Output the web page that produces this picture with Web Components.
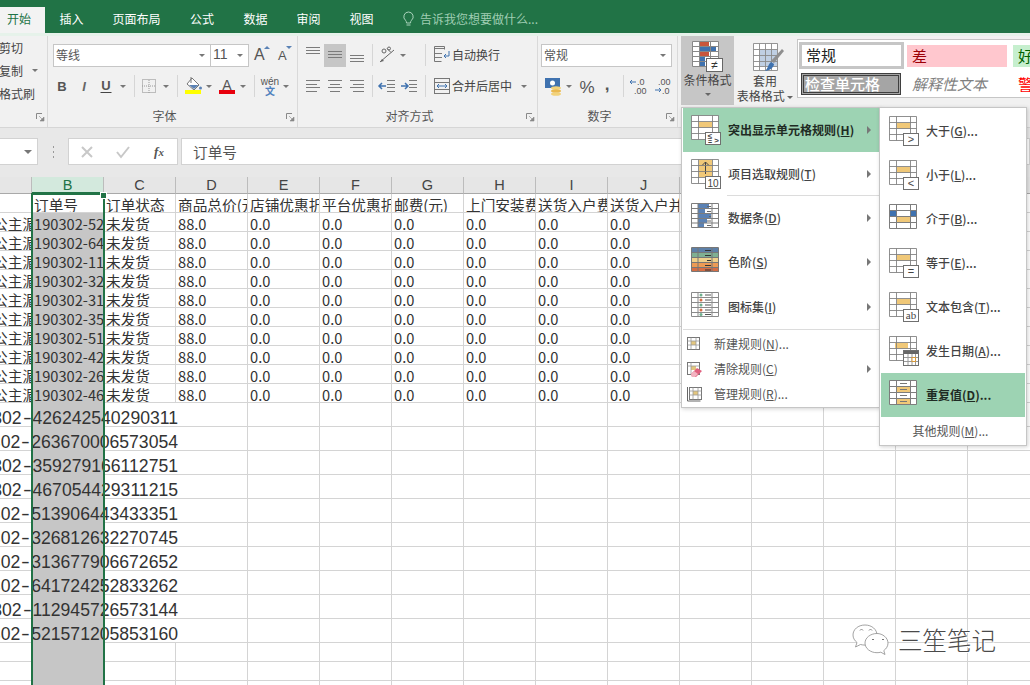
<!DOCTYPE html>
<html lang="zh"><head><meta charset="utf-8"><title>Excel</title>
<style>
html,body{margin:0;padding:0;width:1030px;height:685px;overflow:hidden;background:#fff}
body{font-family:"Noto Sans CJK SC","Liberation Sans",sans-serif;display:flex;flex-direction:column;position:relative}
</style></head><body>
<xl-titlebar></xl-titlebar>
<xl-ribbon>
  <xl-group w="48" label="" launcher="1" pad="0">
    <xl-text w="47" h="23" ml="-1">剪切</xl-text>
    <xl-row h="23"><xl-text w="30" h="23" ml="-1">复制</xl-text><xl-caret w="12"></xl-caret></xl-row>
    <xl-text w="47" h="23" ml="-1">格式刷</xl-text>
  </xl-group>
  <xl-group w="250" label="字体" launcher="1" pad="11">
    <xl-row mb="9" ml="5">
      <xl-select w="158" text="等线" arrow="1"></xl-select><xl-select w="39" text="11" arrow="1" num="1" ml="-1"></xl-select>
      <xl-btn w="22" ml="1" icon="grow"></xl-btn><xl-btn w="22" icon="shrink"></xl-btn>
    </xl-row>
    <xl-row ml="3">
      <xl-btn w="22" icon="bold"></xl-btn><xl-btn w="22" icon="italic"></xl-btn><xl-btn w="22" icon="under"></xl-btn><xl-caret w="12"></xl-caret>
      <xl-sep ml="5" mr="3"></xl-sep><xl-btn w="22" icon="border"></xl-btn><xl-caret w="12"></xl-caret>
      <xl-sep ml="5" mr="4"></xl-sep><xl-btn w="22" icon="fill"></xl-btn><xl-caret w="10"></xl-caret>
      <xl-btn w="22" ml="2" icon="fontcolor"></xl-btn><xl-caret w="10"></xl-caret>
      <xl-sep ml="6" mr="4"></xl-sep><xl-btn w="22" icon="wen"></xl-btn><xl-caret w="10"></xl-caret>
    </xl-row>
  </xl-group>
  <xl-group w="240" label="对齐方式" launcher="1" pad="11">
    <xl-row mb="9" ml="4">
      <xl-btn w="22" icon="atop"></xl-btn><xl-btn w="22" icon="amid" on="1"></xl-btn><xl-btn w="22" icon="abot"></xl-btn>
      <xl-sep ml="4" mr="4"></xl-sep><xl-btn w="22" icon="orient"></xl-btn><xl-caret w="8"></xl-caret>
      <xl-sep ml="18" mr="6"></xl-sep><xl-btn w="20" icon="wrap"></xl-btn><xl-label w="60">自动换行</xl-label>
    </xl-row>
    <xl-row ml="4">
      <xl-btn w="22" icon="aleft"></xl-btn><xl-btn w="22" icon="acen"></xl-btn><xl-btn w="22" icon="aright"></xl-btn>
      <xl-sep ml="4" mr="4"></xl-sep><xl-btn w="22" icon="indl"></xl-btn><xl-btn w="22" icon="indr"></xl-btn>
      <xl-sep ml="4" mr="6"></xl-sep><xl-btn w="20" icon="merge"></xl-btn><xl-label w="60">合并后居中</xl-label><xl-caret w="24"></xl-caret>
    </xl-row>
  </xl-group>
  <xl-group w="140" label="数字" launcher="1" pad="11">
    <xl-row mb="9" ml="3"><xl-select w="131" text="常规" arrow="1"></xl-select></xl-row>
    <xl-row ml="4">
      <xl-btn w="22" ml="0" icon="money"></xl-btn><xl-caret w="10"></xl-caret>
      <xl-btn w="22" ml="2" icon="pct"></xl-btn><xl-btn w="18" icon="comma"></xl-btn>
      <xl-sep ml="7" mr="3"></xl-sep><xl-btn w="22" icon="decl"></xl-btn><xl-btn w="24" icon="decr"></xl-btn>
    </xl-row>
  </xl-group>
  <xl-styles></xl-styles>
</xl-ribbon>
<xl-formula text="订单号"></xl-formula>
<xl-sheet></xl-sheet>

<xl-menu x="681" y="107" w="200" z="3" pt="0">
  <xl-item big="1" on="1" icon="t-le" label="突出显示单元格规则" k="H" arrow="1"></xl-item>
  <xl-item big="1" h="43" icon="t-top" label="项目选取规则" k="T" arrow="1"></xl-item>
  <xl-msep ml="44"></xl-msep>
  <xl-item big="1" icon="t-bar" label="数据条" k="D" arrow="1"></xl-item>
  <xl-item big="1" icon="t-scale" label="色阶" k="S" arrow="1"></xl-item>
  <xl-item big="1" h="45" icon="t-set" label="图标集" k="I" arrow="1"></xl-item>
  <xl-msep ml="0" mb="1"></xl-msep>
  <xl-item icon="s-new" label="新建规则" k="N" tail="..."></xl-item>
  <xl-item icon="s-clr" label="清除规则" k="C" arrow="1"></xl-item>
  <xl-item icon="s-mng" label="管理规则" k="R" tail="..." mb="1"></xl-item>
</xl-menu>
<xl-menu x="879" y="107" w="148" z="4" pt="1">
  <xl-item big="1" icon="t-gt" label="大于" k="G" tail="..."></xl-item>
  <xl-item big="1" icon="t-lt" label="小于" k="L" tail="..."></xl-item>
  <xl-item big="1" icon="t-btw" label="介于" k="B" tail="..."></xl-item>
  <xl-item big="1" icon="t-eq" label="等于" k="E" tail="..."></xl-item>
  <xl-item big="1" icon="t-ab" label="文本包含" k="T" tail="..."></xl-item>
  <xl-item big="1" icon="t-date" label="发生日期" k="A" tail="..."></xl-item>
  <xl-item big="1" on="1" icon="t-dup" label="重复值" k="D" tail="..."></xl-item>
  <xl-item center="1" label="其他规则" k="M" tail="..."></xl-item>
</xl-menu>
<xl-watermark></xl-watermark>

<script>
const FONT='"Noto Sans CJK SC","Liberation Sans",sans-serif';
const LAT='"Liberation Sans","Noto Sans CJK SC",sans-serif';
const s=(w,h,b,extra='')=>`<svg xmlns="http://www.w3.org/2000/svg" width="${w}" height="${h}" viewBox="0 0 ${w} ${h}" ${extra}>${b}</svg>`;
const lines=(a,c='#7b7b7b')=>`<g stroke="${c}" stroke-width="1" fill="none">`+a.map(([x1,x2,y])=>`<path d="M${x1} ${y}H${x2}"/>`).join('')+`</g>`;
const svgText=(x,y,t,o='')=>`<text x="${x}" y="${y}" font-family='"Liberation Sans",sans-serif' ${o}>${t}</text>`;
function table(inner='',badge=''){
  const g='#7d7d7d';
  return s(32,32,`<rect x=".5" y="1.5" width="27" height="24" fill="#fff"/>${inner}
  <path d="M.5 1.5H27.5V25.5H.5ZM.5 7.5H27.5M.5 13.5H27.5M.5 19.5H27.5M7.5 1.5V25.5M21.5 1.5V25.5" fill="none" stroke="${g}" stroke-width="1" opacity=".85"/>${badge}`);
}
const box=(t,size=11,y=28)=>`<rect x="14.5" y="18.5" width="15" height="12" fill="#fff" stroke="#6f6f6f"/>`+svgText(22,y,t,`font-size="${size}" text-anchor="middle" fill="#444"`);
const Y='#f0c878',B='#5b82b5';
const ICONS={
 grow:s(22,22,svgText(4,16,'A','font-size="16" fill="#555"')+`<path d="M14 5l3-3 3 3z" fill="#5b82b5"/>`),
 shrink:s(22,22,svgText(6,16,'A','font-size="13" fill="#555"')+`<path d="M14 2l3 3 3-3z" fill="#5b82b5"/>`),
 bold:s(22,22,svgText(11,16,'B','font-size="13" font-weight="700" text-anchor="middle" fill="#555"')),
 italic:s(22,22,svgText(11,16,'I','font-size="13" font-style="italic" font-weight="700" text-anchor="middle" fill="#666" font-family="Liberation Serif"')),
 under:s(22,22,svgText(11,15,'U','font-size="13" font-weight="700" text-anchor="middle" fill="#555"')+`<path d="M5.5 17.5h11" stroke="#444"/>`),
 border:s(22,22,`<rect x="4.5" y="4.5" width="13" height="13" fill="none" stroke="#888" stroke-dasharray="1 1"/><path d="M11 5v13M4 11h14" stroke="#999" stroke-dasharray="1 1"/>`),
 fill:s(22,22,`<path d="M10 3l7 7-5 5-7-6z" fill="#fff" stroke="#777"/><path d="M9 2v6" stroke="#777"/><path d="M7 10l5 4 4.500-4z" fill="#5b82b5"/><circle cx="18.500" cy="13" r="1.500" fill="#5b82b5"/><rect x="3" y="15" width="16" height="4" fill="#ffff00"/>`),
 fontcolor:s(22,22,svgText(11,15,'A','font-size="14" font-weight="400" text-anchor="middle" fill="#555"')+`<rect x="3" y="15" width="16" height="4" fill="#e8000d"/>`),
 wen:s(22,22,svgText(11,9.500,'wén','font-size="10" text-anchor="middle" fill="#555"')+`<text x="11" y="19.500" font-family='"Noto Sans CJK SC"' font-size="10" font-weight="700" text-anchor="middle" fill="#4f81bd">文</text>`),
 atop:s(22,22,lines([[4,18,3.5],[4,18,6.5],[4,18,9.5]])),
 amid:s(22,22,lines([[4,18,7.5],[4,18,10.5],[4,18,13.5]])),
 abot:s(22,22,lines([[4,18,11.5],[4,18,14.5],[4,18,17.5]])),
 aleft:s(22,22,lines([[4,18,5.5],[4,15,9.5],[4,18,12.5],[4,15,16.5]])),
 acen:s(22,22,lines([[4,18,5.5],[6,16,9.5],[4,18,12.5],[6,16,16.5]])),
 aright:s(22,22,lines([[4,18,5.5],[7,18,9.5],[4,18,12.5],[7,18,16.5]])),
 orient:s(22,22,`<g fill="none" stroke="#666"><path d="M3 18L17 6"/><circle cx="7" cy="7" r="2"/><path d="M10 4.500l4 4"/><circle cx="12" cy="4.500" r="1.500"/></g><path d="M3 18l4-1-2-2z" fill="#666"/>`),
 indl:s(22,22,lines([[10,18,5.5],[10,18,9.5],[10,18,12.5],[10,18,16.5]])+`<path d="M9 11H2M5 8l-3 3 3 3" fill="none" stroke="#3f72af" stroke-width="1.500"/>`),
 indr:s(22,22,lines([[10,18,5.5],[10,18,9.5],[10,18,12.5],[10,18,16.5]])+`<path d="M2 11h7M6 8l3 3-3 3" fill="none" stroke="#3f72af" stroke-width="1.500"/>`),
 wrap:s(20,22,lines([[3,13,4.5],[3,10,9.500],[3,10,13.500],[3,9,17.500]])+`<path d="M2.500 2.500h10v3M2.500 2.500v15h7" fill="none" stroke="#777"/><path d="M12 12h5M17 7v5M12 12l2-2M12 12l2 2" fill="none" stroke="#3f72af"/>`),
 merge:s(20,22,`<rect x="2.500" y="3.500" width="15" height="15" fill="none" stroke="#777"/><path d="M2.500 7.500h15M2.500 14.500h15" stroke="#777"/><path d="M5 11h10M5 11l2-2M5 11l2 2M15 11l-2-2M15 11l-2 2" fill="none" stroke="#3f72af"/>`),
 money:s(22,22,`<rect x="3" y="3" width="15" height="10" fill="#3f72af"/><circle cx="10.500" cy="8" r="2.500" fill="#fff"/><ellipse cx="14" cy="13" rx="5" ry="1.800" fill="#f2d27a"/><ellipse cx="14" cy="16" rx="5" ry="1.800" fill="#eab94f"/><ellipse cx="14" cy="19" rx="5" ry="1.800" fill="#f2d27a"/>`),
 pct:s(22,22,svgText(11,18,'%','font-size="17" text-anchor="middle" fill="#555"')),
 comma:s(18,22,svgText(9,15,',','font-size="17" font-weight="700" text-anchor="middle" fill="#555"')),
 decl:s(22,22,svgText(10,10,'.0','font-size="9" fill="#555"')+svgText(7,18.500,'.00','font-size="9" fill="#555"')+`<path d="M9 7H3M3 7l2-2M3 7l2 2" fill="none" stroke="#3f72af"/>`),
 decr:s(24,22,svgText(9,10,'.00','font-size="9" fill="#555"')+svgText(13,18.500,'.0','font-size="9" fill="#555"')+`<path d="M6 15h6M12 15l-2-2M12 15l-2 2" fill="none" stroke="#3f72af"/>`),
 launcher:s(9,9,`<path d="M.5 .5H6M.5 .5V6" stroke="#888" fill="none"/><path d="M3 3l4 4M8 4v4H4z" fill="#888" stroke="#888" stroke-width=".6"/>`),
 cf:s(32,31,`<rect x=".5" y=".5" width="26" height="25" fill="#fff"/><rect x="8" y="1" width="9" height="5" fill="#c9563c"/><rect x="8" y="6" width="16" height="5" fill="#3f72af"/><rect x="8" y="11" width="9" height="5" fill="#c9563c"/><rect x="8" y="16" width="5" height="5" fill="#3f72af"/><rect x="8" y="21" width="5" height="4" fill="#3f72af"/>
   <path d="M.5 .5H26.500V25.500H.5ZM.5 5.500H26.500M.5 10.500H26.500M.5 15.500H26.500M.5 20.500H26.500M7.500 .5V25.500M18.500 .5V25.500" fill="none" stroke="#888"/>
   <rect x="14.500" y="17.500" width="16" height="13" fill="#fff" stroke="#666"/>`+svgText(22.5,28,'≠','font-size="12" text-anchor="middle" fill="#333"')),
 tf:s(32,30,`<rect x=".5" y=".5" width="24" height="27" fill="#fff"/><rect x="7" y="7" width="17" height="16" fill="#bfcfe3"/><path d="M.5 .5H24.500V27.500H.5ZM.5 6.500H24.500M.5 12.500H24.500M.5 18.500H24.500M.5 23.500H24.500M6.500 .5V27.500M12.500 .5V27.500M18.500 .5V27.500" fill="none" stroke="#8a8a8a" opacity=".9"/>
   <path d="M29 6l2 2-10 12-3-2z" fill="#8f8f8f"/><path d="M18 19l3 2c0 3-4 7-9 7 3-2 3-7 6-9z" fill="#3f72af"/>`),
 't-le':table(`<rect x="8" y="8" width="13" height="5.500" fill="${Y}"/>`,`<rect x="14.500" y="18.500" width="15" height="12" fill="#fff" stroke="#6f6f6f"/>`+svgText(19,25,'≤','font-size="8" text-anchor="middle" fill="#444"')+svgText(19,30,'=','font-size="7" text-anchor="middle" fill="#444"')+svgText(25.5,29,'&gt;','font-size="8" text-anchor="middle" fill="#444"')),
 't-top':table(`<rect x="8" y="2" width="13" height="17" fill="${Y}"/><path d="M14.500 16V4M11 7.500l3.500-3.500 3.500 3.500" fill="none" stroke="#444"/>`,box('10',10,28.5)),
 't-bar':s(32,32,`<rect x=".5" y="1.500" width="27" height="24" fill="#fff"/><rect x="7" y="2" width="11" height="5" fill="${B}"/><rect x="7" y="7" width="7" height="5" fill="${B}"/><rect x="7" y="12" width="13" height="5" fill="${B}"/><rect x="7" y="17" width="9" height="4" fill="${B}"/><rect x="7" y="21" width="6" height="4" fill="${B}"/>
   <path d="M.5 1.500H27.500V25.500H.5ZM.5 6.500H27.500M.5 11.500H27.500M.5 16.500H27.500M.5 21H27.500M7 1.500V25.500M21 1.500V25.500" fill="none" stroke="#7d7d7d"/><path d="M16 4.500h4M16 9.500h4M18 14.500h2M16 19h4M16 23.500h4" stroke="#666"/>`),
 't-scale':s(32,32,`<rect x="1" y="2" width="27" height="5" fill="#5d80a8"/><rect x="1" y="7" width="27" height="5" fill="#7fb092"/><rect x="1" y="12" width="27" height="5" fill="#efd08a"/><rect x="1" y="17" width="27" height="5" fill="#ed9b55"/><rect x="1" y="22" width="27" height="4" fill="#d66d44"/>
   <path d="M.5 1.500H27.500V25.500H.5ZM.5 6.500H27.500M.5 11.500H27.500M.5 16.500H27.500M.5 21.500H27.500M7 1.500V25.500M21 1.500V25.500" fill="none" stroke="#777"/><path d="M14 4.500h6M14 9.500h6M16 14.500h4M14 19.500h6M14 24h6" stroke="#333"/>`),
 't-set':s(32,32,`<rect x=".5" y="1.500" width="27" height="24" fill="#fff"/><path d="M.5 1.500H27.500V25.500H.5ZM.5 6.500H27.500M.5 11.500H27.500M.5 16.500H27.500M.5 21.500H27.500M7 1.500V25.500M21 1.500V25.500" fill="none" stroke="#8a8a8a"/>
   <circle cx="10" cy="4" r="1.500" fill="#6db08d"/><circle cx="10" cy="9" r="1.500" fill="#d66d44"/><circle cx="10" cy="14" r="1.500" fill="#6db08d"/><circle cx="10" cy="19" r="1.500" fill="#d66d44"/><circle cx="10" cy="23.500" r="1.500" fill="#6db08d"/>
   <path d="M14 4h6M14 9h6M14 14h6M14 19h6M14 23.500h6" stroke="#555"/>`),
 't-gt':table(`<rect x="8" y="8" width="13" height="5.500" fill="${Y}"/>`,box('&gt;')),
 't-lt':table(`<rect x="8" y="8" width="13" height="5.500" fill="${Y}"/>`,box('&lt;')),
 't-btw':s(32,32,`<rect x=".5" y="1.500" width="27" height="24" fill="#fff"/><rect x="1" y="8" width="7" height="5.500" fill="#3f72af"/><rect x="21" y="8" width="7" height="5.500" fill="#3f72af"/><rect x="8" y="14" width="13" height="5.500" fill="${Y}"/><path d="M.5 1.500H27.500V25.500H.5ZM.5 7.500H27.500M.5 13.500H27.500M.5 19.500H27.500M7.500 1.500V25.500M21.500 1.500V25.500" fill="none" stroke="#7d7d7d"/>`),
 't-eq':table(`<rect x="8" y="8" width="13" height="5.500" fill="${Y}"/>`,box('=')),
 't-ab':table(`<rect x="8" y="8" width="13" height="5.500" fill="${Y}"/>`,`<rect x="14.500" y="18.500" width="15" height="12" fill="#fff" stroke="#6f6f6f"/><text x="22" y="28" font-family="Liberation Serif" font-size="11" text-anchor="middle" fill="#444">ab</text>`),
 't-date':table(`<rect x="6" y="8" width="13" height="5.500" fill="${Y}"/>`,`<rect x="14.500" y="15.500" width="15" height="15" fill="#fff" stroke="#6f6f6f"/><rect x="15" y="16" width="14" height="3" fill="#666"/><path d="M15 22.500h14M15 26.500h14M19 19v11M23 19v11M26.500 19v11" stroke="#999"/><rect x="23" y="22.500" width="3.500" height="4" fill="#fff" stroke="#d89a3b"/>`),
 't-dup':s(32,32,`<rect x=".5" y="1.500" width="27" height="24" fill="#fff"/><rect x="8" y="8" width="13" height="5.500" fill="${Y}"/><rect x="8" y="19.500" width="13" height="6" fill="${Y}"/><path d="M.5 1.500H27.500V25.500H.5ZM.5 7.500H27.500M.5 13.500H27.500M.5 19.500H27.500M7.500 1.500V25.500M21.500 1.500V25.500" fill="none" stroke="#7d7d7d"/><path d="M11 4.500h7M11 10.500h7M11 16.500h7M11 22.500h7" stroke="#777"/>`),
 's-new':s(16,16,`<rect x="1.500" y="1.500" width="12" height="12" fill="#fff" stroke="#777"/><rect x="5" y="5" width="5" height="4" fill="#e3c67e"/><path d="M1.500 5h12M1.500 9h12M5 1.500v12M10 1.500v12" stroke="#999" stroke-width=".8"/>`),
 's-clr':s(16,16,`<rect x="1.500" y="1.500" width="12" height="12" fill="#fff" stroke="#777"/><rect x="5" y="5" width="5" height="4" fill="#e3c67e"/><path d="M1.500 5h12M5 1.500v12" stroke="#999" stroke-width=".8"/><path d="M5 13l6-6 5 3-6 6H6z" fill="#e0607e"/><path d="M5 13l3-3 4 3-3 3H6z" fill="#f2b3c0"/>`),
 's-mng':s(16,16,`<rect x="3.500" y="1.500" width="12" height="12" fill="#fff" stroke="#777"/><rect x="7" y="5" width="5" height="4" fill="#e3c67e"/><path d="M3.500 5h12M3.500 9h12M7 1.500v12M12 1.500v12" stroke="#999" stroke-width=".8"/><path d="M1.500 1v14h13" fill="none" stroke="#666"/>`)
};
const attr=(el,n,d)=>el.hasAttribute(n)?el.getAttribute(n):d;
class Base extends HTMLElement{
  render(css,html){const r=this.attachShadow({mode:'open'});r.innerHTML=`<style>${css}</style>${html}`;return r;}
  px(prop,a,def){const v=attr(this,a,def);if(v!==undefined&&v!==null)this.style[prop]=v+'px';}
}
customElements.define('xl-titlebar',class extends Base{connectedCallback(){
  const tabs=[['开始',45,1],['插入',53],['页面布局',77],['公式',54],['数据',53],['审阅',53],['视图',53]];
  this.render(`:host{display:flex;align-items:flex-end;height:33px;background:#217346;font:12px ${FONT};color:#fff;flex:none}
  .t{height:26px;display:flex;align-items:center;justify-content:center;padding-bottom:4px;box-sizing:border-box}
  .a{background:#f3f3f3;color:#217346;padding-right:7px}
  .s{display:flex;align-items:center;height:26px;padding-bottom:3px;box-sizing:border-box;margin-left:14px;color:#9fcdb2;gap:5px}`,
  tabs.map(t=>`<div class="t ${t[2]?'a':''}" style="width:${t[1]}px">${t[0]}</div>`).join('')+
  `<div class="s"><svg width="13" height="16" viewBox="0 0 13 16"><path d="M6.500 1a4.700 4.700 0 0 0-3 8.300c.7.7 1 1.500 1 2.700h4c0-1.200.3-2 1-2.700a4.700 4.700 0 0 0-3-8.300zM4.500 14h4" fill="none" stroke="#a9d3bb"/></svg><span>告诉我您想要做什么...</span></div>`);
}});
customElements.define('xl-ribbon',class extends Base{connectedCallback(){
  this.render(`:host{display:flex;height:95px;flex:none;box-sizing:border-box;background:#f1f1f1;border-top:3px solid #e6f2ea;border-bottom:1px solid #d6d6d6;font:12px ${FONT};color:#444;overflow:hidden}`,`<slot></slot>`);
}});
customElements.define('xl-group',class extends Base{connectedCallback(){
  const lab=attr(this,'label','');
  const pad=+attr(this,'pad','0');
  this.style.width=attr(this,'w')+'px';
  this.render(`:host{display:flex;flex-direction:column;box-sizing:border-box;height:91px;border-right:1px solid #d9d9d9;flex:none}
  .b{flex:none;height:71px;box-sizing:border-box;padding-top:${pad?pad-3:0}px;display:flex;flex-direction:column;overflow:hidden}
  .l{display:grid;grid-template-columns:1fr auto 1fr;align-items:center;height:17px;color:#555;font-size:12px;padding:0 0 0 0}
  .lab{transform:none;margin-right:16px}
  .m{justify-self:end;display:flex;margin-right:2px;margin-top:3px}`,
  `<div class="b"><slot></slot></div><div class="l"><span></span><span class="lab">${lab}</span><span class="m">${ICONS.launcher}</span></div>`);
}});
customElements.define('xl-row',class extends Base{connectedCallback(){
  this.px('marginBottom','mb',0);this.px('marginLeft','ml',0);this.px('height','h',22);
  this.render(`:host{display:flex;align-items:center;flex:none}`,`<slot></slot>`);
}});
customElements.define('xl-text',class extends Base{connectedCallback(){
  this.px('height','h');this.px('marginLeft','ml');if(this.hasAttribute('w'))this.style.width=attr(this,'w')+'px';
  this.render(`:host{display:flex;align-items:center;white-space:nowrap;color:#444;font-size:12px;flex:none}`,`<slot></slot>`);
}});
customElements.define('xl-label',class extends Base{connectedCallback(){
  this.style.width=attr(this,'w','60')+'px';
  this.render(`:host{display:flex;align-items:center;height:22px;box-sizing:border-box;padding-bottom:1px;white-space:nowrap;color:#444;font-size:12px;flex:none}`,`<slot></slot>`);
}});
customElements.define('xl-caret',class extends Base{connectedCallback(){
  this.style.width=attr(this,'w','10')+'px';
  this.render(`:host{display:flex;align-items:center;justify-content:center;height:22px;flex:none}
  i{display:block;width:0;height:0;border:3px solid transparent;border-top:3px solid #777;border-bottom:0}`,`<i></i>`);
}});
customElements.define('xl-sep',class extends Base{connectedCallback(){
  this.px('marginLeft','ml',0);this.px('marginRight','mr',0);
  this.render(`:host{display:block;width:1px;height:22px;background:#d6d6d6;flex:none}`,``);
}});
customElements.define('xl-btn',class extends Base{connectedCallback(){
  this.style.width=attr(this,'w','22')+'px';this.px('marginLeft','ml',0);
  this.render(`:host{display:flex;align-items:center;justify-content:center;height:22px;flex:none;${this.hasAttribute('on')?'background:#c6c6c6;height:23px':''}}svg{display:block}`,ICONS[attr(this,'icon')]||'');
}});
customElements.define('xl-select',class extends Base{connectedCallback(){
  this.style.width=attr(this,'w')+'px';this.px('marginLeft','ml',0);
  this.render(`:host{display:flex;align-items:center;box-sizing:border-box;height:23px;flex:none;background:#fff;border:1px solid #c6c6c6;padding:0 5px 2px 2px;font:${this.hasAttribute('num')?'14px '+LAT:'12px '+FONT};color:#555}
  span{flex:1}i{display:block;border:3px solid transparent;border-top:3px solid #777;border-bottom:0;margin-top:2px}`,`<span>${attr(this,'text')}</span><i></i>`);
}});
customElements.define('xl-styles',class extends Base{connectedCallback(){
  this.render(`:host{display:flex;flex:none;width:353px;font:12px ${FONT};color:#444;padding-left:3px;box-sizing:border-box}
  .btn{width:53px;height:69px;display:flex;flex-direction:column;align-items:center;padding-top:5px;box-sizing:border-box;flex:none;line-height:15px;text-align:center}
  .on{background:#c6c6c6}
  .ic{height:31px;display:flex;justify-content:center;flex:none}.ic svg{display:block}
  .tf{width:62px;padding-top:7px}.tf .ic{height:30px;padding-left:8px}
  .t2{white-space:nowrap;height:15px;flex:none}
  i{display:inline-block;border:3px solid transparent;border-top:3px solid #666;border-bottom:0;vertical-align:middle}
  .gal{margin-left:1px;margin-top:3px;width:240px;height:59px;box-sizing:border-box;border:1px solid #c6c6c6;background:#fff;display:grid;grid-template-columns:105px 106px 40px;grid-template-rows:27px 26px;padding:2px 0 0 1px;overflow:hidden;font-size:15px}
  .c{display:flex;align-items:center;box-sizing:border-box;padding:0 0 2px 5px;white-space:nowrap}
  .n{border:3px solid #c6c6c6;background:#fff;color:#222;width:105px;height:27px;padding-left:4px}
  .bad{background:#ffc7ce;color:#9c0006;width:100px;height:22px;margin:3px 0 0 3px}
  .good{background:#c6efce;color:#006100;width:40px;height:22px;margin:3px 0 0 3px}
  .chk{background:#a5a5a5;color:#fff;width:100px;height:22px;margin:4px 0 0 2px;padding-left:3px;border:1px solid #3f3f3f;outline:1px solid #3f3f3f;outline-offset:-3px;font-weight:500}
  .exp{color:#7f7f7f;font-style:italic;margin:4px 0 0 8px;padding-left:0}
  .warn{color:#f00;margin:4px 0 0 8px;padding-left:0}`,
  `<div class="btn on"><div class="ic">${ICONS.cf}</div><div class="t2">条件格式</div><div style="height:14px;display:flex;align-items:center"><i></i></div></div>
   <div class="btn tf"><div class="ic">${ICONS.tf}</div><div class="t2">套用</div><div class="t2">表格格式 <i></i></div></div>
   <div class="gal"><div class="c n">常规</div><div class="c bad">差</div><div class="c good">好</div>
   <div class="c chk">检查单元格</div><div class="c exp">解释性文本</div><div class="c warn">警告文本</div></div>`);
}});
customElements.define('xl-formula',class extends Base{connectedCallback(){
  this.render(`:host{display:flex;flex:none;height:49px;box-sizing:border-box;padding-top:10px;background:#e8e8e8;font:14.67px ${FONT};color:#555;align-items:flex-start}
  .box{height:27px;box-sizing:border-box;background:#fff;border:1px solid #d2d2d2;display:flex;align-items:center;flex:none}
  .name{width:38px;border-left:0;justify-content:flex-end;padding-right:5px}
  .name i{border:4px solid transparent;border-top:4px solid #777;border-bottom:0}
  .dots{width:30px;display:flex;justify-content:center;align-items:center;height:27px;flex:none}
  .fx{width:110px;display:grid;grid-template-columns:repeat(3,36px);padding-left:0;justify-items:center}
  .inp{flex:1;margin-left:3px;padding-left:11px}
  em{font:italic 700 13px "Liberation Serif",serif;color:#555}`,
  `<div class="box name"><i></i></div><div class="dots"><svg width="3" height="14"><path d="M1.500 1v2M1.500 6v2M1.500 11v2" stroke="#999"/></svg></div>
  <div class="box fx"><svg width="14" height="14" viewBox="0 0 14 14"><path d="M2 2l10 10M12 2L2 12" stroke="#c8c8c8" stroke-width="2"/></svg><svg width="16" height="14" viewBox="0 0 16 14"><path d="M2 7l4 5 8-10" fill="none" stroke="#c8c8c8" stroke-width="2"/></svg><em>f<small>x</small></em></div>
  <div class="box inp">${attr(this,'text')}</div>`);
}});
customElements.define('xl-sheet',class extends Base{connectedCallback(){
  const cols='BCDEFGHIJKLMNO'.split('');
  const ids=['521571205853160','641724252833262','112945726573144','326812632270745','313677906672652','359279166112751','513906443433351','426242540290311','263670006573054','467054429311215'];
  const big=['426242540290311','263670006573054','359279166112751','467054429311215','513906443433351','326812632270745','313677906672652','641724252833262','112945726573144','521571205853160'];
  const heads=['订单号','订单状态','商品总价(元)','店铺优惠折扣','平台优惠折扣','邮费(元)','上门安装费','送货入户费','送货入户并安装费'];
  const vals=['未发货','88.0','0.0','0.0','0.0','0.0','0.0','0.0'];
  const empties=n=>Array.from({length:n},()=>'<div class="c"></div>').join('');
  let h=`<div class="hd"><div class="h"></div>${cols.map(c=>`<div class="h ${c==='B'?'sel':''}">${c}</div>`).join('')}</div>`;
  h+=`<div class="r"><div class="c"></div>${heads.map(t=>`<div class="c">${t}</div>`).join('')}${empties(5)}</div>`;
  ids.forEach(id=>{h+=`<div class="r"><div class="c a"><span>公主湄</span></div><div class="c g">190302-${id}</div>${vals.map(v=>`<div class="c">${v}</div>`).join('')}${empties(5)}</div>`;});
  big.forEach(id=>{
    let cells='';
    for(let i=1;i<=15;i++){const cl=i===2?'c g':(i===1||i===3?'c nb':'c');cells+=`<div class="${cl}" style="grid-row:1;grid-column:${i}"></div>`;}
    h+=`<div class="r big">${cells}<div class="ov"><span>190302<span class="hy">-</span>${id}</span></div></div>`;
  });
  for(let i=0;i<3;i++)h+=`<div class="r"><div class="c"></div><div class="c g"></div>${empties(13)}</div>`;
  this.render(`:host{display:block;flex:1;position:relative;overflow:hidden;font:14.67px ${FONT};color:#333;background:#fff}
  .hd,.r{display:grid;grid-template-columns:32px repeat(14,72px)}
  .hd{height:17px;background:#e6e6e6}
  .h{box-sizing:border-box;height:17px;border-right:1px solid #bcbcbc;border-bottom:1px solid #a9a9a9;display:flex;align-items:center;justify-content:center;font:14.5px ${LAT};color:#444}
  .sel{background:#d3e9dd;color:#217346;border-bottom:2px solid #217346}
  .r{height:19px}.big{height:24px}
  .c{box-sizing:border-box;border-right:1px solid #d4d4d4;border-bottom:1px solid #d4d4d4;overflow:hidden;white-space:nowrap;padding-left:2px;line-height:21px;min-width:0}
  .a{padding-left:0}.a span{margin-left:-7px;display:block}
  .g{background:#c6c6c6;border-color:#c6c6c6}
  .big .nb{border-right:0}
  .big .ov{grid-row:1;grid-column:1/5;padding-right:70px;overflow:hidden;white-space:nowrap;font:17.6px/31px ${LAT};color:#333;height:24px;z-index:1;display:flex;justify-content:flex-end}
  .ov>span{flex:none}
  .hy{display:inline-block;width:11px;text-align:center;transform:scaleX(1.5)}
  .sel-box{position:absolute;left:31px;top:16px;width:74px;bottom:-6px;box-sizing:border-box;border:2px solid #217346;pointer-events:none;z-index:2}
  .sel-box i{position:absolute;right:-3px;top:-2px;width:5px;height:5px;background:#217346;display:block;outline:1px solid #fff}`,
  h+`<div class="sel-box"><i></i></div>`);
}});
customElements.define('xl-menu',class extends Base{connectedCallback(){
  const st=this.style;st.left=attr(this,'x')+'px';st.top=attr(this,'y')+'px';st.width=attr(this,'w')+'px';st.zIndex=attr(this,'z');
  this.render(`:host{position:absolute;box-sizing:border-box;background:#fff;border:1px solid #c6c6c6;padding:${attr(this,'pt','0')}px 1px 0;box-shadow:1px 1px 4px rgba(0,0,0,.18);display:flex;flex-direction:column}`,`<slot></slot>`);
}});
customElements.define('xl-msep',class extends Base{connectedCallback(){
  this.px('marginLeft','ml',0);this.px('marginBottom','mb',0);
  this.render(`:host{display:block;height:1px;background:#dcdcdc;flex:none}`,``);
}});
customElements.define('xl-item',class extends Base{connectedCallback(){
  const big=this.hasAttribute('big'),on=this.hasAttribute('on'),ctr=this.hasAttribute('center');
  const h=attr(this,'h',big?44:(ctr?28:25));
  const ic=attr(this,'icon');
  this.px('marginBottom','mb',0);
  this.render(`:host{display:flex;align-items:center;box-sizing:border-box;height:${h}px;flex:none;font:${on?700:(big?500:400)} 12px/1 ${FONT};color:${on?'#1f2b24':(big?'#444':'#555')};padding-left:${big?8:3}px;white-space:nowrap;${on?'background:#9dd3b3;':''}${ctr?'justify-content:center;padding:0 5px 0 0;':''}}
  .i{flex:none;display:flex;margin-right:${big?5:12}px}.i svg{display:block}
  .a{margin-left:auto;margin-right:8px;width:0;height:0;border:4px solid transparent;border-left:4px solid #777;border-right:0}
  u{text-underline-offset:1px}`,
  `${ic?`<span class="i">${ICONS[ic]}</span>`:''}<span>${attr(this,'label')}(<u>${attr(this,'k')}</u>)${attr(this,'tail','')}</span>${this.hasAttribute('arrow')?'<span class="a"></span>':''}`);
}});
customElements.define('xl-watermark',class extends Base{connectedCallback(){
  this.render(`:host{position:absolute;left:852px;top:624px;display:flex;align-items:flex-start;gap:8px;z-index:2;font:300 24.500px/31px ${FONT};color:#4a4a4a;text-shadow:1px 1px 0 #fff;white-space:nowrap}`,
  `<svg width="38" height="32" viewBox="0 0 38 32"><g fill="#fff" stroke="#8c8c8c" stroke-width=".8"><path d="M13 1C6 1 1 5.500 1 11c0 3 1.500 5.500 4 7.500L3.500 23l5-2.500c1.500.4 3 .6 4.500.6 7 0 12-4.500 12-10S20 1 13 1z"/><path d="M25 9.500c-6.600 0-12 4.300-12 9.600s5.400 9.600 12 9.600c1.300 0 2.600-.2 3.800-.5l4.200 2.300-1.200-3.900c2.500-1.800 4.200-4.500 4.200-7.500 0-5.300-5.400-9.600-11-9.600z"/></g><path d="M8 6.500l1.500-1.500 1.500 1.500M17 6.500l1.500-1.500 1.500 1.500" fill="none" stroke="#888"/><path d="M20 15.500h2M30 15.500h2" stroke="#777" stroke-width="1.200"/></svg><span>三笙笔记</span>`);
}});
</script>
</body></html>
